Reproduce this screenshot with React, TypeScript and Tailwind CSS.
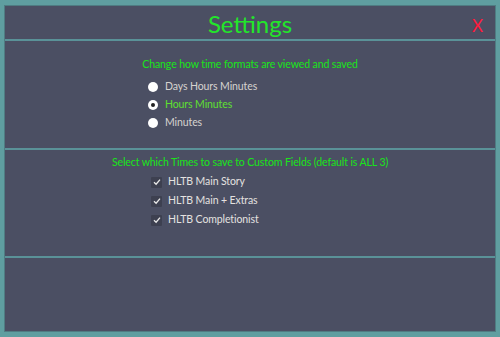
import React from "react";

const font = { fontFamily: 'Lato, "Noto Sans", sans-serif' };

function Radio({ label, checked }: { label: string; checked?: boolean }) {
  return (
    <div className="flex h-[18px] items-center gap-[7px]">
      <span className="flex h-[10px] w-[10px] items-center justify-center rounded-full bg-white">
        {checked && <span className="h-[4px] w-[4px] rounded-full bg-[#222]" />}
      </span>
      <span className={checked ? "text-[#5fe030]" : "text-[#d6d3cf]"}>{label}</span>
    </div>
  );
}

function Check({ label }: { label: string }) {
  return (
    <div className="flex h-[19px] items-center gap-[6px]">
      <span className="flex h-[11px] w-[11px] items-center justify-center rounded-[1px] bg-[#3d4050]">
        <svg width="8" height="8" viewBox="0 0 8 8">
          <path d="M1 4.2 L3.1 6.2 L7 1.6" fill="none" stroke="#e8e8e8" strokeWidth="1.3" />
        </svg>
      </span>
      <span className="text-[#e4e2e0]">{label}</span>
    </div>
  );
}

export default function App() {
  return (
    <div className="h-[337px] w-[500px] bg-[#5f9ea0] px-[4px] pb-[5px] pt-[5px]" style={font}>
      <div className="flex h-full flex-col border border-[#4f7c82] bg-[#4b4f63]">
        <header className="relative flex h-[33px] items-center justify-center pt-[3px]">
          <h1 className="text-[24px] leading-none text-[#22e62a]">Settings</h1>
          <span className="absolute right-[12px] top-[11px] text-[17px] leading-none text-[#ff1a3d]">X</span>
        </header>
        <div className="h-[2px] bg-[#5a9298]" />
        <section className="h-[107px] pt-[16px] text-[10.5px] tracking-[-0.1px]">
          <p className="text-center text-[#19e619]">Change how time formats are viewed and saved</p>
          <div className="mt-[5px] pl-[143px]">
            <Radio label="Days Hours Minutes" />
            <Radio label="Hours Minutes" checked />
            <Radio label="Minutes" />
          </div>
        </section>
        <div className="h-[2px] bg-[#5a9298]" />
        <section className="h-[106px] pt-[5px] text-[10.5px] tracking-[-0.1px]">
          <p className="text-center text-[#19e619]">Select which Times to save to Custom Fields (default is ALL 3)</p>
          <div className="mt-[2px] pl-[146px]">
            <Check label="HLTB Main Story" />
            <Check label="HLTB Main + Extras" />
            <Check label="HLTB Completionist" />
          </div>
        </section>
        <div className="h-[2px] bg-[#5a9298]" />
        <div className="flex-1" />
      </div>
    </div>
  );
}
